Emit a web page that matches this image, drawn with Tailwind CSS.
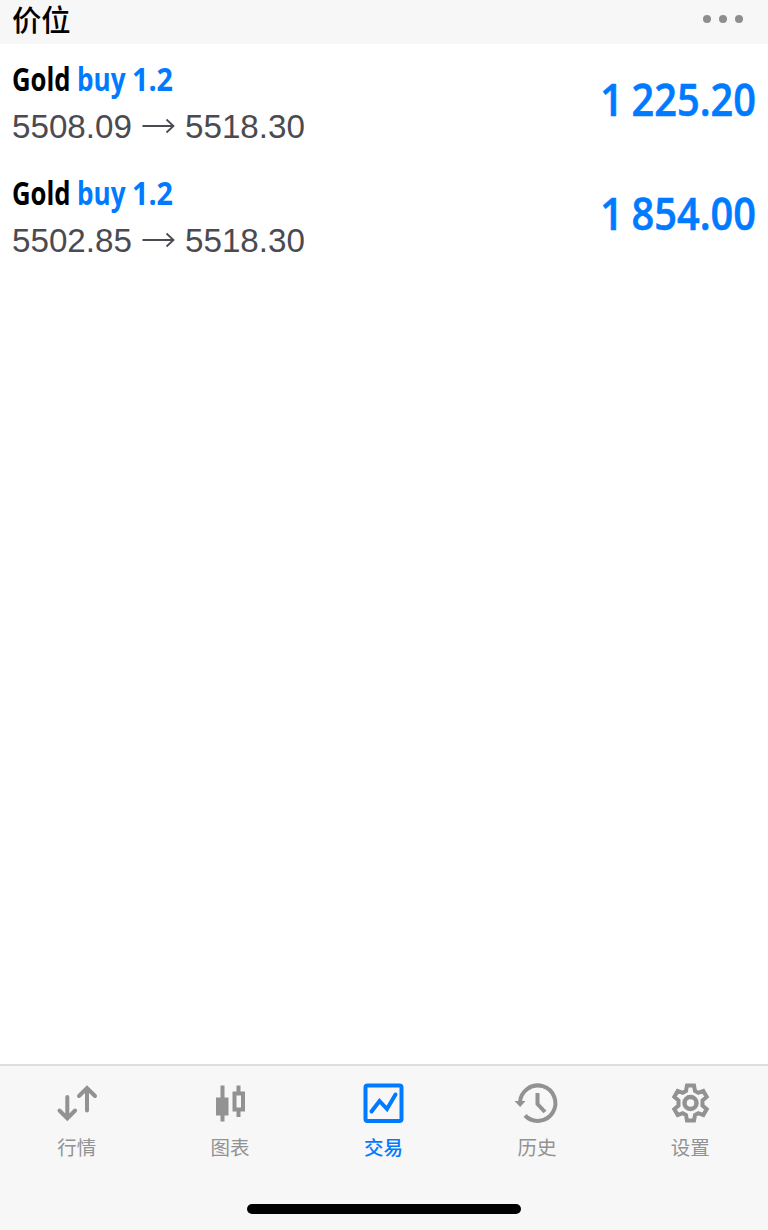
<!DOCTYPE html>
<html lang="zh-CN">
<head>
  <meta charset="UTF-8" />
  <meta name="viewport" content="width=device-width, initial-scale=1.0" />
  <title>交易</title>
  <script src="https://cdn.jsdelivr.net/npm/@tailwindcss/browser@4"></script>
</head>
<body class="bg-white">
  <div class="w-[768px] h-[1230px] flex flex-col overflow-hidden font-['Liberation_Sans','Noto_Sans_CJK_SC',sans-serif]">
    <!-- Section header -->
    <header class="h-11 shrink-0 bg-[#f7f7f7] flex items-start justify-between pl-3 pr-[25.5px]">
      <h1 class="text-[29.3px] leading-[36px] font-medium text-black font-['Noto_Sans_CJK_SC',sans-serif]">价位</h1>
      <div class="flex gap-2 pt-[14.5px]">
        <span class="size-2 rounded-full bg-[#8e8e8e]"></span>
        <span class="size-2 rounded-full bg-[#8e8e8e]"></span>
        <span class="size-2 rounded-full bg-[#8e8e8e]"></span>
      </div>
    </header>

    <!-- Open positions -->
    <main class="flex-1">
      <div class="h-[114px] flex justify-between">
        <div class="pt-[15px]">
          <svg class="block font-['Open_Sans',sans-serif] font-bold text-[33px]" width="200" height="46">
            <text x="12" y="31.5" textLength="58.5" lengthAdjust="spacingAndGlyphs" fill="#000">Gold</text>
            <text x="77" y="31.5" textLength="48.5" lengthAdjust="spacingAndGlyphs" fill="#007aff">buy</text>
            <text x="132" y="31.5" textLength="41" lengthAdjust="spacingAndGlyphs" fill="#007aff">1.2</text>
          </svg>
          <div class="flex items-center pl-[12px] text-[33.2px] leading-[43px] text-[#4b4a50]">
            <span class="w-[130px]">5508.09</span>
            <svg class="w-[43px] h-5" viewBox="0 0 43 20" fill="none" stroke="currentColor" stroke-width="1.800"><path d="M0.500 9h31M24.500 2.500l7 6.500-7 6.500" /></svg>
            <span>5518.30</span>
          </div>
        </div>
        <svg class="block font-['Open_Sans',sans-serif] font-semibold text-[45.5px]" width="180" height="100">
          <text x="12" y="72" textLength="23.500" lengthAdjust="spacingAndGlyphs" fill="#007aff" stroke="#007aff" stroke-width="0.600">1</text>
          <text x="43.5" y="72" textLength="124.500" lengthAdjust="spacingAndGlyphs" fill="#007aff" stroke="#007aff" stroke-width="0.600">225.20</text>
        </svg>
      </div>
      <div class="h-[114px] flex justify-between">
        <div class="pt-[15px]">
          <svg class="block font-['Open_Sans',sans-serif] font-bold text-[33px]" width="200" height="46">
            <text x="12" y="31.5" textLength="58.5" lengthAdjust="spacingAndGlyphs" fill="#000">Gold</text>
            <text x="77" y="31.5" textLength="48.5" lengthAdjust="spacingAndGlyphs" fill="#007aff">buy</text>
            <text x="132" y="31.5" textLength="41" lengthAdjust="spacingAndGlyphs" fill="#007aff">1.2</text>
          </svg>
          <div class="flex items-center pl-[12px] text-[33.2px] leading-[43px] text-[#4b4a50]">
            <span class="w-[130px]">5502.85</span>
            <svg class="w-[43px] h-5" viewBox="0 0 43 20" fill="none" stroke="currentColor" stroke-width="1.800"><path d="M0.500 9h31M24.500 2.500l7 6.500-7 6.500" /></svg>
            <span>5518.30</span>
          </div>
        </div>
        <svg class="block font-['Open_Sans',sans-serif] font-semibold text-[45.5px]" width="180" height="100">
          <text x="12" y="72" textLength="23.500" lengthAdjust="spacingAndGlyphs" fill="#007aff" stroke="#007aff" stroke-width="0.600">1</text>
          <text x="43.5" y="72" textLength="124.500" lengthAdjust="spacingAndGlyphs" fill="#007aff" stroke="#007aff" stroke-width="0.600">854.00</text>
        </svg>
      </div>
    </main>

    <!-- Tab bar -->
    <footer class="h-[166px] shrink-0 bg-[#f7f7f7] border-t-2 border-[#dedede] flex flex-col items-center">
      <nav class="w-full grid grid-cols-5 pt-[14px] pr-px text-[19.5px] leading-7 font-normal text-[#929292] font-['Noto_Sans_CJK_SC',sans-serif]">
        <a class="flex flex-col items-center gap-[5px]">
          <svg class="w-12 h-12" viewBox="0 0 48 48" fill="none" stroke="currentColor" stroke-width="4" stroke-linecap="round">
            <path d="M14.300 17v21M6.500 30.500l7.800 8 7.800-8M34 30.500v-22M26 16l8-8 8 8" />
          </svg>
          <span>行情</span>
        </a>
        <a class="flex flex-col items-center gap-[5px]">
          <svg class="w-12 h-12" viewBox="0 0 48 48" fill="currentColor">
            <path d="M14.500 5.500h4v12h4v18h-4v6h-4v-6h-4.500v-18h4.500z" />
            <path fill-rule="evenodd" d="M30.500 5.500h4v6h4.500v20h-4.500v5.500h-4v-5.500H26.500v-20h4zM30.500 15.500v12h4.500v-12z" />
          </svg>
          <span>图表</span>
        </a>
        <a class="flex flex-col items-center gap-[5px] text-[#007aff]">
          <svg class="w-12 h-12" viewBox="0 0 48 48" fill="none" stroke="currentColor" stroke-width="4">
            <rect x="6.500" y="5.500" width="36" height="35.500" rx="2" />
            <path d="M12.500 31.500l8-10.500 7.500 8 8.500-14.500" stroke-linecap="round" />
          </svg>
          <span class="font-medium">交易</span>
        </a>
        <a class="flex flex-col items-center gap-[5px]">
          <svg class="w-12 h-12" viewBox="0 0 48 48" fill="none" stroke="currentColor" stroke-width="4">
            <path d="M7 22.500A17.700 17.700 0 1 1 12 35.500" />
            <path d="M24.500 13v11l7.500 8" />
            <path d="M1.500 21h11l-5.300 6z" fill="currentColor" stroke="none" />
          </svg>
          <span>历史</span>
        </a>
        <a class="flex flex-col items-center gap-[5px]">
          <svg class="w-12 h-12" viewBox="0 0 48 48" fill="none" stroke="currentColor">
            <path stroke-width="4" d="M21 5.500h7l1 5.400 3.300 1.900 5-1.900 3.400 6-4.200 3.500v5.200l4.200 3.500-3.400 6-5-1.900-3.300 1.900-1 5.400h-7l-1-5.400-3.300-1.900-5 1.900-3.400-6 4.200-3.500v-5.200l-4.200-3.500 3.400-6 5 1.900 3.300-1.900z" />
            <circle cx="24.500" cy="23" r="6" stroke-width="4.500" />
          </svg>
          <span>设置</span>
        </a>
      </nav>
      <div class="mt-[43px] w-[274px] h-2.5 rounded-full bg-black"></div>
    </footer>
  </div>
</body>
</html>
